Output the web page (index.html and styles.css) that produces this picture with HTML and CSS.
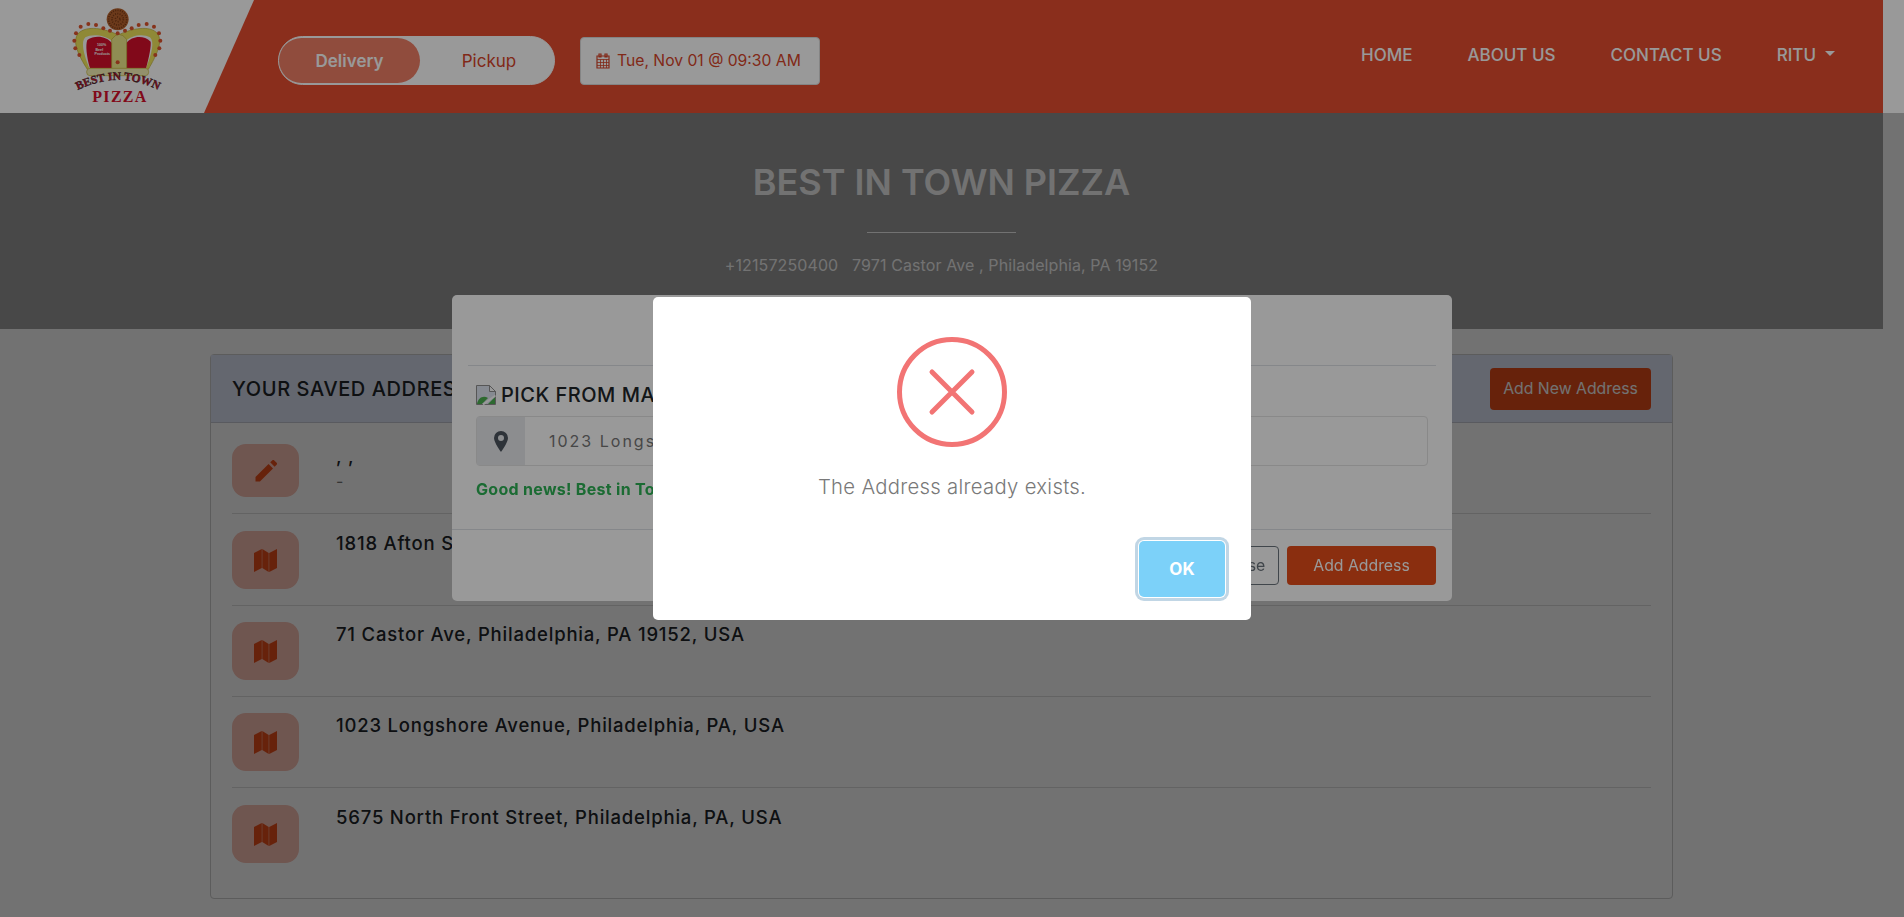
FILE: index.html
```html
<!DOCTYPE html>
<html lang="en">
<head>
   <meta charset="UTF-8">
   <meta name="viewport" content="width=device-width, initial-scale=1.0">
   <title>Best In Town Pizza</title>
   <link rel="stylesheet" href="styles.css">
</head>
<body>
   <header class="topbar">
       <div class="topbar-inner">
           <div class="brand">
               <svg class="logo" viewBox="0 0 150 112" width="150" height="112">
                   <g transform="scale(.3333)">
                       <circle cx="203" cy="58" r="33" fill="#b5622e"/>
                       <circle cx="203" cy="58" r="27" fill="none" stroke="#7a3a16" stroke-width="5" stroke-dasharray="3 4"/>
                       <circle cx="203" cy="58" r="17" fill="none" stroke="#7a3a16" stroke-width="5" stroke-dasharray="3 4"/>
                       <circle cx="203" cy="58" r="7" fill="none" stroke="#7a3a16" stroke-width="5" stroke-dasharray="3 4"/>
                       <path d="M112 208C85 165 65 125 85 100 110 75 165 85 205 105 245 85 300 75 322 100 340 125 320 165 295 208Z" fill="#efe45c" stroke="#bfae30" stroke-width="2"/>
                       <path d="M118 205C100 160 92 125 106 112 125 100 165 105 186 122L186 205ZM288 205C306 160 314 125 300 112 281 100 245 105 228 122L228 205Z" fill="#fff"/>
                       <path d="M120 205C110 170 106 135 112 120 135 104 170 108 186 130L186 205ZM288 205C298 170 304 135 302 125 280 104 245 108 229 130L229 205Z" fill="#d8102c"/>
                       <path d="M185 118Q207 88 230 118L230 206 185 206Z" fill="#efe98a" stroke="#bfae30" stroke-width="2"/>
                       <rect x="110" y="205" width="186" height="22" rx="10" fill="#f6f0b4" stroke="#c9bb3a" stroke-width="2"/>
                       <g fill="#e0552e">
                           <circle cx="92" cy="80" r="6"/><circle cx="115" cy="72" r="6"/><circle cx="138" cy="75" r="6"/><circle cx="160" cy="85" r="6"/><circle cx="180" cy="92" r="6"/><circle cx="203" cy="100" r="6"/><circle cx="225" cy="92" r="6"/><circle cx="245" cy="85" r="6"/><circle cx="266" cy="75" r="6"/><circle cx="290" cy="72" r="6"/><circle cx="312" cy="80" r="6"/>
                           <circle cx="78" cy="100" r="6"/><circle cx="73" cy="122" r="6"/><circle cx="76" cy="145" r="6"/><circle cx="88" cy="165" r="6"/><circle cx="327" cy="100" r="6"/><circle cx="331" cy="122" r="6"/><circle cx="328" cy="145" r="6"/><circle cx="316" cy="165" r="6"/><circle cx="203" cy="187" r="6"/>
                       </g>
                   </g>
                   <g class="logo-small">
                       <text x="47" y="46">100%</text>
                       <text x="45.500" y="50.500">Beef</text>
                       <text x="44.500" y="55">Products</text>
                   </g>
                   <path id="logoArc" d="M26 91Q68 69 110 91" fill="none"/>
                   <text class="logo-town"><textPath href="#logoArc" startOffset="50%" text-anchor="middle">BEST IN TOWN</textPath></text>
                   <text class="logo-pizza" x="70" y="102" text-anchor="middle">PIZZA</text>
               </svg>
           </div>
           <div class="bar">
               <div class="order-type">
                   <span class="order-type-on">Delivery</span>
                   <span class="order-type-off">Pickup</span>
               </div>
               <div class="when">
                   <svg class="cal" viewBox="0 0 14 16" width="14" height="16">
                       <path d="M1 3h12v12H1z M3 1h2v3H3z M9 1h2v3H9z" fill="none" stroke="currentColor" stroke-width="1.2"/>
                       <path d="M1 6.5h12M1 9.5h12M1 12.5h12M4.5 6.5v8.5M7.5 6.5v8.5M10.5 6.5v8.5" stroke="currentColor" stroke-width=".8"/>
                   </svg>
                   Tue, Nov 01 @ 09:30 AM
               </div>
               <nav class="menu">
                   <a>HOME</a>
                   <a>ABOUT US</a>
                   <a>CONTACT US</a>
                   <a class="menu-user">RITU <i class="caret"></i></a>
               </nav>
           </div>
       </div>
   </header>

   <div class="page">
       <section class="hero">
           <h1>BEST IN TOWN PIZZA</h1>
           <div class="hero-rule"></div>
           <p>+12157250400 &nbsp; 7971 Castor Ave , Philadelphia, PA 19152</p>
       </section>

       <section class="saved">
           <div class="saved-head">
               <h2>YOUR SAVED ADDRESSES</h2>
               <button class="btn btn-add-new">Add New Address</button>
           </div>
           <div class="saved-list">
               <div class="addr addr-first">
                   <div class="addr-icon addr-icon-short">
                       <svg viewBox="0 0 24 24" width="28" height="28"><path d="M3 17.2V21h3.8L18 9.8 14.2 6 3 17.2zM15.6 4.6l3.8 3.8 1.7-1.7c.5-.5.5-1.3 0-1.8l-2-2c-.5-.5-1.3-.5-1.8 0l-1.7 1.7z" fill="currentColor"/></svg>
                   </div>
                   <div class="addr-text">
                       <div>, ,</div>
                       <div class="addr-sub">-</div>
                   </div>
               </div>
               <div class="addr addr-second">
                   <div class="addr-icon"><svg viewBox="0 0 23 23" width="23" height="23"><path d="M0 4l7.8-4v19L0 23zM8.3 0l6.4 4v19l-6.4-4zM15.2 4L23 0v19l-7.8 4z" fill="currentColor"/></svg></div>
                   <div class="addr-text">1818 Afton Street, Philadelphia, PA, USA</div>
               </div>
               <div class="addr">
                   <div class="addr-icon"><svg viewBox="0 0 23 23" width="23" height="23"><path d="M0 4l7.8-4v19L0 23zM8.3 0l6.4 4v19l-6.4-4zM15.2 4L23 0v19l-7.8 4z" fill="currentColor"/></svg></div>
                   <div class="addr-text">71 Castor Ave, Philadelphia, PA 19152, USA</div>
               </div>
               <div class="addr">
                   <div class="addr-icon"><svg viewBox="0 0 23 23" width="23" height="23"><path d="M0 4l7.8-4v19L0 23zM8.3 0l6.4 4v19l-6.4-4zM15.2 4L23 0v19l-7.8 4z" fill="currentColor"/></svg></div>
                   <div class="addr-text">1023 Longshore Avenue, Philadelphia, PA, USA</div>
               </div>
               <div class="addr addr-last">
                   <div class="addr-icon"><svg viewBox="0 0 23 23" width="23" height="23"><path d="M0 4l7.8-4v19L0 23zM8.3 0l6.4 4v19l-6.4-4zM15.2 4L23 0v19l-7.8 4z" fill="currentColor"/></svg></div>
                   <div class="addr-text">5675 North Front Street, Philadelphia, PA, USA</div>
               </div>
           </div>
       </section>
   </div>

   <div class="backdrop"></div>

   <div class="modal">
       <div class="modal-top"></div>
       <div class="modal-body">
           <div class="pick">
               <svg class="broken" viewBox="0 0 20 20" width="20" height="20">
                   <path d="M.5.5h13l6 6v13H.5z" fill="#dfe6f2" stroke="#8f8f8f"/>
                   <path d="M13.5.5v6h6z" fill="#fff" stroke="#8f8f8f"/>
                   <path d="M1 19c1-6 6-9 11-6l-6 6z" fill="#4caf50"/>
                   <path d="M19 12v7h-7z" fill="#4caf50"/>
                   <path d="M7 19.5l12.5-9" stroke="#fff" stroke-width="2"/>
               </svg>
               <span>PICK FROM MAP</span>
           </div>
           <div class="field">
               <span class="field-icon">
                   <svg viewBox="0 0 14 21" width="14" height="21"><path fill-rule="evenodd" d="M7 0a7 7 0 0 0-7 7c0 4.500 7 14 7 14s7-9.500 7-14a7 7 0 0 0-7-7zm0 4a3 3 0 1 1 0 6 3 3 0 0 1 0-6z" fill="currentColor"/></svg>
               </span>
               <input class="field-input" type="text" value="1023 Longshore Avenue, Philadelphia, PA, USA">
           </div>
           <p class="good-news">Good news! Best in Town Pizza delivers to this address.</p>
       </div>
       <div class="modal-foot">
           <button class="btn btn-close">Close</button>
           <button class="btn btn-add">Add Address</button>
       </div>
   </div>

   <div class="overlay">
       <div class="alert">
           <div class="alert-icon">
               <svg viewBox="0 0 110 110" width="110" height="110">
                   <circle cx="55" cy="55" r="52.500" fill="none" stroke="#f27474" stroke-width="5"/>
                   <path d="M35 35l40 40M75 35L35 75" stroke="#f27474" stroke-width="5" stroke-linecap="round"/>
               </svg>
           </div>
           <p class="alert-text">The Address already exists.</p>
           <div class="alert-foot">
               <button class="alert-ok">OK</button>
           </div>
       </div>
   </div>
</body>
</html>
```

FILE: styles.css
```css
html, body {
    margin: 0;
    padding: 0;
    height: 100%;
    overflow: hidden;
}
body {
    font-family: Inter, "Liberation Sans", sans-serif;
    background-color: #fff;
    color: #212529;
}
.topbar {
    position: relative;
    z-index: 30;
    background-color: #fff;
}
.topbar-inner {
    display: flex;
    width: 1883px;
    height: 113px;
    background-color: #e64e30;
}
.brand {
    width: 254px;
    flex: none;
    background-color: #fff;
    clip-path: polygon(0 0, 100% 0, 204px 100%, 0 100%);
    padding-left: 50px;
    box-sizing: border-box;
}
.logo {
    display: block;
}
.logo-small {
    font-family: "Liberation Sans", sans-serif;
    font-size: 3.600px;
    font-weight: bold;
    fill: #fff;
}
.logo-town {
    font-family: "Liberation Serif", serif;
    font-size: 11.500px;
    font-weight: bold;
    fill: #d8102c;
    stroke: #222;
    stroke-width: .4px;
}
.logo-pizza {
    font-family: "Liberation Serif", serif;
    font-size: 16px;
    font-weight: bold;
    letter-spacing: 1.300px;
    fill: #d8102c;
}
.bar {
    flex: 1;
    display: flex;
    align-items: center;
    padding: 0 48px 0 24px;
    min-width: 0;
}
.order-type {
    display: flex;
    align-items: stretch;
    width: 277px;
    height: 49px;
    box-sizing: border-box;
    padding: 1px 0;
    background-color: #fff;
    border: 1px solid #fff;
    border-radius: 25px;
    font-size: 17px;
    margin-top: 8px;
}
.order-type span {
    display: flex;
    align-items: center;
    justify-content: center;
}
.order-type-on {
    width: 141px;
    background-color: #f07f67;
    color: #fff;
    font-weight: 600;
    border-radius: 25px;
}
.order-type-off {
    flex: 1;
    padding-left: 4px;
    color: #d8452a;
}
.when {
    display: flex;
    align-items: center;
    gap: 7px;
    margin-left: 25px;
    margin-top: 8px;
    width: 240px;
    height: 48px;
    box-sizing: border-box;
    padding-left: 15px;
    background-color: #fff;
    border: 1px solid #ddd;
    border-radius: 4px;
    font-size: 15.700px;
    color: #d8452a;
}
.cal {
    flex: none;
}
.menu {
    margin-left: auto;
    display: flex;
    gap: 55px;
    margin-top: -4px;
    font-size: 17px;
    font-weight: 500;
    color: #fff;
}
.menu-user {
    display: flex;
    align-items: center;
    gap: 9px;
}
.caret {
    width: 0;
    height: 0;
    border-left: 5px solid transparent;
    border-right: 5px solid transparent;
    border-top: 5px solid #fff;
    margin-top: -3px;
}
.page {
    width: 1883px;
}
.hero {
    height: 216px;
    background-color: #a0a0a0;
    box-sizing: border-box;
    padding-top: 48px;
    text-align: center;
    color: #fff;
}
.hero h1 {
    margin: 0;
    font-size: 36px;
    line-height: 42px;
    font-weight: 600;
}
.hero-rule {
    width: 149px;
    height: 1px;
    margin: 29px auto 21px;
    background-color: #fff;
}
.hero p {
    margin: 0;
    font-size: 16px;
    line-height: 22px;
    letter-spacing: .1px;
}
.saved {
    width: 1463px;
    margin: 25px 0 0 210px;
    border: 1px solid #ccc;
    border-radius: 4px;
    box-sizing: border-box;
}
.saved-head {
    display: flex;
    align-items: center;
    justify-content: space-between;
    height: 68px;
    box-sizing: border-box;
    padding: 0 21px;
    background-color: #dfe6f8;
    border-bottom: 1px solid #c6cad4;
}
.saved-head h2 {
    margin: 0;
    font-size: 20px;
    font-weight: 450;
    letter-spacing: .6px;
}
.btn {
    font-family: inherit;
    font-size: 15.800px;
    border-radius: 4px;
    border: 1px solid transparent;
    padding: 0;
    color: #fff;
}
.btn-add-new {
    width: 161px;
    height: 42px;
    background-color: #e64e1a;
}
.saved-list {
    padding: 21px 21px 0;
    height: 475px;
    box-sizing: border-box;
}
.addr {
    display: flex;
    gap: 37px;
    height: 91px;
    box-sizing: border-box;
    padding-top: 16px;
    border-bottom: 1px solid #ddd;
    font-size: 18.500px;
    line-height: 24px;
    font-weight: 450;
    letter-spacing: .8px;
}
.addr-first {
    height: 70px;
    padding-top: 0;
}
.addr-second {
    height: 92px;
    padding-top: 17px;
}
.addr-last {
    border-bottom: none;
    padding-top: 17px;
}
.addr-icon {
    width: 67px;
    height: 58px;
    flex: none;
    display: flex;
    align-items: center;
    justify-content: center;
    background-color: #f8bfb2;
    border-radius: 14px;
    color: #e64e1a;
}
.addr-icon-short {
    height: 53px;
}
.addr-sub {
    margin-top: 3px;
    color: #777;
    font-size: 16px;
    line-height: 20px;
    font-weight: 400;
}
.backdrop {
    position: fixed;
    inset: 0;
    z-index: 10;
    background-color: rgba(0, 0, 0, .25);
}
.modal {
    position: fixed;
    z-index: 20;
    left: 452px;
    top: 295px;
    width: 1000px;
    height: 306px;
    display: flex;
    flex-direction: column;
    background-color: #fff;
    border-radius: 5px;
    box-sizing: border-box;
}
.modal-top {
    height: 71px;
    margin: 0 16px;
    box-sizing: border-box;
    border-bottom: 1px solid #dee2e6;
}
.modal-body {
    flex: 1;
    padding: 17px 24px 0;
}
.pick {
    display: flex;
    align-items: center;
    gap: 5px;
    height: 24px;
    font-size: 20px;
    font-weight: 450;
    letter-spacing: .5px;
}
.field {
    display: flex;
    height: 50px;
    margin-top: 9px;
    box-sizing: border-box;
    border: 1px solid #e4e4e4;
    border-radius: 4px;
}
.field-icon {
    width: 48px;
    display: flex;
    align-items: center;
    justify-content: center;
    background-color: #e9ecef;
    color: #4e5560;
}
.field-input {
    flex: 1;
    border: none;
    outline: none;
    background: none;
    padding: 0 24px;
    font-family: inherit;
    font-size: 16px;
    letter-spacing: 2px;
    color: #777;
}
.good-news {
    margin: 11px 0 0;
    font-size: 16px;
    line-height: 24px;
    font-weight: 700;
    letter-spacing: .3px;
    color: #2db355;
}
.modal-foot {
    height: 72px;
    border-top: 1px solid #dee2e6;
    display: flex;
    justify-content: flex-end;
    align-items: center;
    gap: 8px;
    padding-right: 16px;
    box-sizing: border-box;
}
.btn-close {
    width: 70px;
    height: 39px;
    background: #fff;
    border-color: #6c757d;
    color: #6c757d;
}
.btn-add {
    width: 149px;
    height: 39px;
    background-color: #e64e1a;
}
.overlay {
    position: fixed;
    inset: 0;
    z-index: 40;
    background-color: rgba(0, 0, 0, .4);
}
.alert {
    position: absolute;
    left: 653px;
    top: 297px;
    width: 598px;
    height: 323px;
    background-color: #fff;
    border-radius: 5px;
    box-sizing: border-box;
    padding-top: 40px;
    text-align: center;
}
.alert-icon {
    height: 110px;
    line-height: 0;
}
.alert-text {
    margin: 28px 0 0;
    font-size: 20.300px;
    line-height: 24px;
    font-weight: 300;
    letter-spacing: .3px;
    color: #797979;
}
.alert-foot {
    display: flex;
    justify-content: flex-end;
    padding: 42px 26px 0 0;
}
.alert-ok {
    width: 86px;
    height: 56px;
    border: none;
    border-radius: 5px;
    background-color: #7cd1f9;
    box-shadow: 0 0 0 1px #fff, 0 0 0 4px rgba(43, 114, 165, .29);
    font-family: inherit;
    font-size: 17px;
    font-weight: 700;
    color: #fff;
}
```
